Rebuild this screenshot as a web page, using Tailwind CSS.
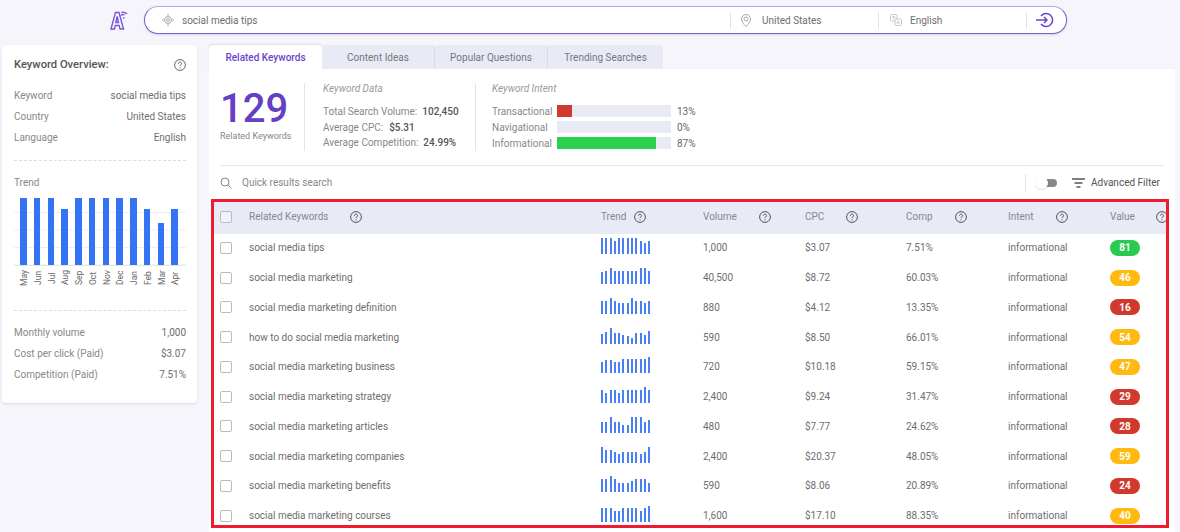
<!DOCTYPE html>
<html lang="en">
<head>
<meta charset="UTF-8">
<title>Keyword Overview</title>
<script src="https://cdn.jsdelivr.net/npm/@tailwindcss/browser@4"></script>
</head>
<body class="bg-[#f6f5fc] font-['Roboto',sans-serif] text-[#6e6e6e] text-[10px] w-[1180px] h-[532px] overflow-hidden">

<!-- top search -->
<header class="flex items-center h-[45px] pb-[5px]">
  <svg class="ml-[110px] w-[18px] h-[20px] text-[#7a55d8]" viewBox="0 0 18 20" fill="none" stroke="currentColor" stroke-width="1.400"><path d="M1 19 5.500 2.500h3.500L13.500 19H10l-.8-3.500H5.300L4.500 19Z"/><path d="M5.900 12.500 7.200 6.500l1.300 6Z"/><path d="M11 5.500a3 3 0 0 1 3.500-.5M11.500 2.500a6 6 0 0 1 5.500 1.500M13 8.500l1.500-1"/></svg>
  <div class="ml-[16px] w-[923px] h-[28px] flex items-center bg-white rounded-full border border-[#7b5bd0] border-t-[#b9a6e8] shadow-sm">
    <svg class="ml-[17px] w-[12px] h-[12px] text-[#aaa]" viewBox="0 0 12 12" fill="none" stroke="currentColor"><circle cx="6" cy="6" r="3.500"/><circle cx="6" cy="6" r="1.400"/><path d="M6 0v2M6 10v2M0 6h2M10 6h2"/></svg>
    <span class="ml-[8px] w-[548px]">social media tips</span>
    <div class="w-[148px] h-[17px] flex items-center border-l border-[#e4e4e4]">
      <svg class="ml-[10px] w-[10px] h-[13px] text-[#aaa]" viewBox="0 0 10 13" fill="none" stroke="currentColor"><path d="M5 12.500C2 9.500.5 7.500.5 5a4.500 4.500 0 0 1 9 0c0 2.500-1.500 4.500-4.500 7.500Z"/><circle cx="5" cy="5" r="2"/></svg>
      <span class="ml-[11px]">United States</span>
    </div>
    <div class="w-[148px] h-[17px] flex items-center border-l border-[#e4e4e4]">
      <svg class="ml-[11px] w-[12px] h-[12px] text-[#bbb]" viewBox="0 0 12 12" fill="none" stroke="currentColor" stroke-width=".8"><rect x=".5" y=".5" width="6.500" height="6.500" rx="1"/><rect x="5" y="5" width="6.500" height="6.500" rx="1" fill="#fff"/><path d="M2 3h3.500M3.700 2v3M7 10l1.200-3 1.300 3"/></svg>
      <span class="ml-[8px]">English</span>
    </div>
    <div class="h-[17px] flex items-center border-l border-[#e4e4e4]">
      <svg class="ml-[8px] w-[20px] h-[16px] text-[#6a45cc]" viewBox="0 0 20 16" fill="none" stroke="currentColor" stroke-width="1.500"><path d="M6 4a6.500 6.500 0 1 1 0 8"/><path d="M1 8h11M9 5l3 3-3 3"/></svg>
    </div>
  </div>
</header>

<div class="flex items-start">
  <!-- keyword overview card -->
  <aside class="ml-[2px] w-[195px] h-[358px] bg-white rounded-sm shadow pl-[12px] pr-[11px] pt-[13px]">
    <div class="flex justify-between items-center h-[14px]">
      <b class="font-medium text-[11.200px] text-[#555]">Keyword Overview:</b>
      <svg class="w-[12px] h-[12px] text-[#666]" viewBox="0 0 12 12" fill="none" stroke="currentColor"><circle cx="6" cy="6" r="5.400"/><path d="M4.500 4.600a1.500 1.500 0 1 1 2.300 1.300c-.6.400-.8.600-.8 1.200M6 8.300v1"/></svg>
    </div>
    <div class="mt-[13px] flex flex-col border-b border-dashed border-[#ddd] pb-[12px]">
      <div class="flex justify-between h-[21px] items-center"><span class="text-[#888]">Keyword</span><span>social media tips</span></div>
      <div class="flex justify-between h-[21px] items-center"><span class="text-[#888]">Country</span><span>United States</span></div>
      <div class="flex justify-between h-[21px] items-center"><span class="text-[#888]">Language</span><span>English</span></div>
    </div>
    <div class="mt-[15px] h-[12px] flex items-center text-[#888]">Trend</div>
    <div id="chart" class="relative mt-[11px] h-[67px] flex justify-between items-end pl-[6px] pr-[8px] border-b border-[#e5e5e5] bg-[linear-gradient(#eee_1px,transparent_1px)] bg-[length:100%_17.500px] bg-[position:0_13px]"></div>
    <div id="months" class="h-[44px] flex justify-between pl-[6px] pr-[8px] pt-[4px] text-[8.500px] text-[#666]"></div>
    <div class="border-t border-dashed border-[#ddd] pt-[11px] flex flex-col">
      <div class="flex justify-between h-[21px] items-center"><span class="text-[#888]">Monthly volume</span><span>1,000</span></div>
      <div class="flex justify-between h-[21px] items-center"><span class="text-[#888]">Cost per click (Paid)</span><span>$3.07</span></div>
      <div class="flex justify-between h-[21px] items-center"><span class="text-[#888]">Competition (Paid)</span><span>7.51%</span></div>
    </div>
  </aside>

  <main class="ml-[12px] w-[966px]">
    <!-- tabs -->
    <div class="flex h-[24px]">
      <div class="w-[113px] pt-[1px] flex items-center justify-center bg-white rounded-t-sm font-medium text-[#6a45cc] shadow-[0_-1px_2px_rgba(0,0,0,.1)]">Related Keywords</div>
      <div class="w-[113px] pt-[1px] flex items-center justify-center bg-[#e8eaf6] text-[#777] border-r border-[#d8daea] rounded-t-sm">Content Ideas</div>
      <div class="w-[113px] pt-[1px] flex items-center justify-center bg-[#e8eaf6] text-[#777] border-r border-[#d8daea] rounded-t-sm">Popular Questions</div>
      <div class="w-[115px] pt-[1px] flex items-center justify-center bg-[#e8eaf6] text-[#777] rounded-t-sm">Trending Searches</div>
    </div>

    <div class="bg-white h-[463px] overflow-hidden">
      <!-- summary -->
      <div class="mx-[11px] h-[97px] pt-[14px] flex items-start border-b border-[#e8e8e8]">
        <div class="w-[85px] h-[68px] border-r border-[#e4e4e4] flex flex-col">
          <span class="text-[40px] leading-[40px] mt-[6px] font-medium text-[#6340c4]">129</span>
          <span class="text-[9px] leading-[12px] mt-[1px] text-[#888]">Related Keywords</span>
        </div>
        <div class="ml-[18px] w-[153px] h-[68px] border-r border-[#e4e4e4]">
          <div class="italic text-[#999] h-[11px] leading-[11px]">Keyword Data</div>
          <div class="mt-[9px] h-[16px] flex items-center text-[#888]">Total Search Volume:<b class="ml-[5px] font-medium text-[#555]">102,450</b></div>
          <div class="h-[16px] flex items-center text-[#888]">Average CPC:<b class="ml-[6px] font-medium text-[#555]">$5.31</b></div>
          <div class="h-[15px] flex items-center text-[#888]">Average Competition:<b class="ml-[5px] font-medium text-[#555]">24.99%</b></div>
        </div>
        <div class="ml-[16px]">
          <div class="italic text-[#999] h-[11px] leading-[11px]">Keyword Intent</div>
          <div class="mt-[9px] h-[16px] flex items-center text-[#888]"><span class="w-[65px]">Transactional</span><div class="w-[114px] h-[12px] bg-[#e8eaf6]"><div class="h-full bg-[#d0392b]" style="width:13%"></div></div><span class="ml-[6px] text-[#666]">13%</span></div>
          <div class="h-[16px] flex items-center text-[#888]"><span class="w-[65px]">Navigational</span><div class="w-[114px] h-[12px] bg-[#e8eaf6]"></div><span class="ml-[6px] text-[#666]">0%</span></div>
          <div class="h-[16px] flex items-center text-[#888]"><span class="w-[65px]">Informational</span><div class="w-[114px] h-[12px] bg-[#e8eaf6]"><div class="h-full bg-[#2ad14f]" style="width:87%"></div></div><span class="ml-[6px] text-[#666]">87%</span></div>
        </div>
      </div>

      <!-- quick search and filter -->
      <div class="mx-[11px] h-[33px] flex items-center">
        <svg class="w-[12px] h-[12px] text-[#888]" viewBox="0 0 12 12" fill="none" stroke="currentColor"><circle cx="5" cy="5" r="4"/><path d="m8 8 3.500 3.500"/></svg>
        <span class="ml-[10px] text-[#888] w-[783px]">Quick results search</span>
        <span class="w-px h-[18px] bg-[#e4e4e4]"></span>
        <span class="relative ml-[11px] w-[20px] h-[8px] rounded-full bg-[#888]"><span class="absolute left-[-1px] top-[-2px] w-[12px] h-[12px] rounded-full bg-white shadow"></span></span>
        <svg class="ml-[15px] w-[13px] h-[10px] text-[#555]" viewBox="0 0 13 10" fill="none" stroke="currentColor" stroke-width="1.300"><path d="M0 1h13M2.500 5h8M4.500 9h4"/></svg>
        <span class="ml-[6px] text-[#555]">Advanced Filter</span>
      </div>

      <!-- table, with the red marker frame laid over it -->
      <div class="relative ml-[2px] w-[958px] h-[329px] pt-[3px] overflow-hidden">
        <div class="grid grid-cols-[29px_352px_102px_102px_101px_102px_102px_1fr] items-center pl-[9px] pb-[3px] h-[32px] bg-[#e8eaf6] text-[#888]">
          <span class="w-[12px] h-[12px] border border-[#bbb] rounded-[2px] bg-[#f1f2fa]"></span>
          <span class="flex justify-between items-center w-[113px]">Related Keywords<svg class="w-[12px] h-[12px] text-[#555]" viewBox="0 0 12 12" fill="none" stroke="currentColor"><circle cx="6" cy="6" r="5.400"/><path d="M4.500 4.600a1.500 1.500 0 1 1 2.300 1.300c-.6.400-.8.600-.8 1.200M6 8.300v1"/></svg></span>
          <span class="flex justify-between items-center w-[45px]">Trend<svg class="w-[12px] h-[12px] text-[#555]" viewBox="0 0 12 12" fill="none" stroke="currentColor"><circle cx="6" cy="6" r="5.400"/><path d="M4.500 4.600a1.500 1.500 0 1 1 2.300 1.300c-.6.400-.8.600-.8 1.200M6 8.300v1"/></svg></span>
          <span class="flex justify-between items-center w-[68px]">Volume<svg class="w-[12px] h-[12px] text-[#555]" viewBox="0 0 12 12" fill="none" stroke="currentColor"><circle cx="6" cy="6" r="5.400"/><path d="M4.500 4.600a1.500 1.500 0 1 1 2.300 1.300c-.6.400-.8.600-.8 1.200M6 8.300v1"/></svg></span>
          <span class="flex justify-between items-center w-[53px]">CPC<svg class="w-[12px] h-[12px] text-[#555]" viewBox="0 0 12 12" fill="none" stroke="currentColor"><circle cx="6" cy="6" r="5.400"/><path d="M4.500 4.600a1.500 1.500 0 1 1 2.300 1.300c-.6.400-.8.600-.8 1.200M6 8.300v1"/></svg></span>
          <span class="flex justify-between items-center w-[61px]">Comp<svg class="w-[12px] h-[12px] text-[#555]" viewBox="0 0 12 12" fill="none" stroke="currentColor"><circle cx="6" cy="6" r="5.400"/><path d="M4.500 4.600a1.500 1.500 0 1 1 2.300 1.300c-.6.400-.8.600-.8 1.200M6 8.300v1"/></svg></span>
          <span class="flex justify-between items-center w-[60px]">Intent<svg class="w-[12px] h-[12px] text-[#555]" viewBox="0 0 12 12" fill="none" stroke="currentColor"><circle cx="6" cy="6" r="5.400"/><path d="M4.500 4.600a1.500 1.500 0 1 1 2.300 1.300c-.6.400-.8.600-.8 1.200M6 8.300v1"/></svg></span>
          <span class="flex justify-between items-center w-[58px]">Value<svg class="w-[12px] h-[12px] text-[#555]" viewBox="0 0 12 12" fill="none" stroke="currentColor"><circle cx="6" cy="6" r="5.400"/><path d="M4.500 4.600a1.500 1.500 0 1 1 2.300 1.300c-.6.400-.8.600-.8 1.200M6 8.300v1"/></svg></span>
        </div>
        <div id="rows"></div>
        <div class="absolute inset-0 border-[3px] border-[#ed1c2e] pointer-events-none"></div>
      </div>
    </div>
  </main>
</div>

<script>
  var months = ['May','Jun','Jul','Aug','Sep','Oct','Nov','Dec','Jan','Feb','Mar','Apr'];
  var overview = [67,67,67,56,67,67,67,67,67,56,42,56];
  var chart = document.getElementById('chart');
  var labels = document.getElementById('months');
  overview.forEach(function (h, i) {
    var bar = document.createElement('span');
    bar.className = 'w-[6.500px] bg-[#3573f5]';
    bar.style.height = h + 'px';
    chart.appendChild(bar);
    var m = document.createElement('span');
    m.className = 'w-[6.500px] flex justify-center leading-[8px] [writing-mode:vertical-rl] rotate-180 h-[16px]';
    m.textContent = months[i];
    labels.appendChild(m);
  });

  var green = 'bg-[#2ac951]', amber = 'bg-[#ffb90f]', red = 'bg-[#d0392b]';
  var data = [
    ['social media tips','1,000','$3.07','7.51%',81,green,[16,16,16,13,16,16,16,16,16,13,11,13]],
    ['social media marketing','40,500','$8.72','60.03%',46,amber,[12,13,16,13,13,13,13,13,13,16,16,13]],
    ['social media marketing definition','880','$4.12','13.35%',16,red,[13,13,16,13,11,11,11,16,13,13,11,13]],
    ['how to do social media marketing','590','$8.50','66.01%',54,amber,[10,12,16,11,11,9,8,6,11,11,9,13]],
    ['social media marketing business','720','$10.18','59.15%',47,amber,[11,13,13,11,11,14,14,14,14,14,14,16]],
    ['social media marketing strategy','2,400','$9.24','31.47%',29,red,[13,10,13,13,10,13,13,13,13,13,16,13]],
    ['social media marketing articles','480','$7.77','24.62%',28,red,[11,11,16,11,11,8,8,16,16,16,11,13]],
    ['social media marketing companies','2,400','$20.37','48.05%',59,amber,[16,13,13,11,9,11,11,11,11,9,11,16]],
    ['social media marketing benefits','590','$8.06','20.89%',24,red,[13,13,16,13,9,9,9,11,13,13,13,9]],
    ['social media marketing courses','1,600','$17.10','88.35%',40,amber,[14,14,14,11,11,14,14,14,14,11,14,16]]
  ];
  document.getElementById('rows').innerHTML = data.map(function (r) {
    var bars = r[6].map(function (h) {
      return '<i class="w-[2px] bg-[#4a80f5]" style="height:' + h + 'px"></i>';
    }).join('');
    return '<div class="grid grid-cols-[29px_352px_102px_102px_101px_102px_102px_1fr] items-center pl-[9px] h-[29.75px] first:mt-[-1px]">' +
      '<span class="w-[12px] h-[12px] border border-[#bbb] rounded-[2px]"></span>' +
      '<span>' + r[0] + '</span>' +
      '<span class="flex items-end gap-[2.300px] h-[16px] mb-[3px]">' + bars + '</span>' +
      '<span>' + r[1] + '</span><span>' + r[2] + '</span><span>' + r[3] + '</span><span>informational</span>' +
      '<span class="w-[30px] h-[16px] rounded-full flex items-center justify-center text-white font-bold ' + r[5] + '">' + r[4] + '</span>' +
      '</div>';
  }).join('');
</script>
</body>
</html>
